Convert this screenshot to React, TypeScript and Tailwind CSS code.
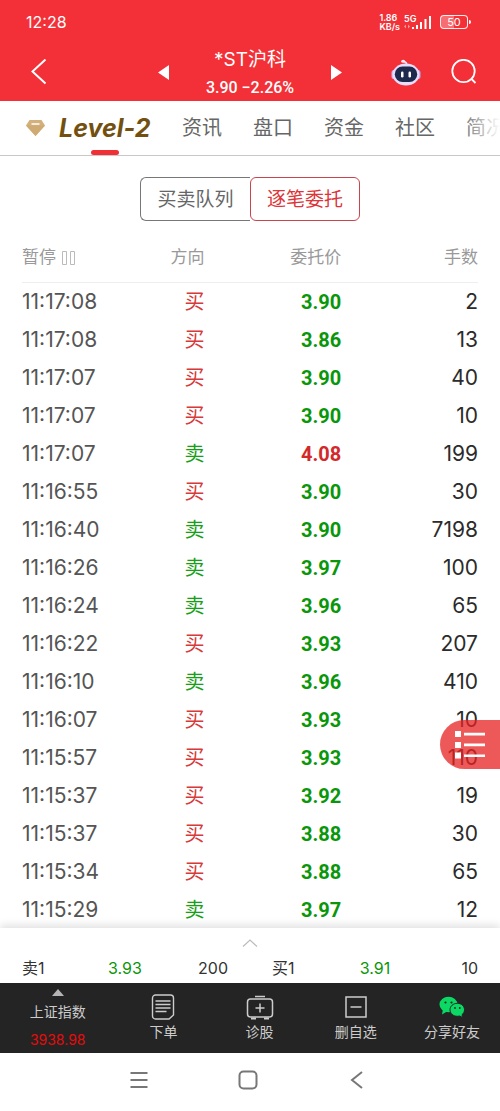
import React, { useState } from 'react';
import clsx from 'clsx';

type Side = '买' | '卖';

interface Order {
  time: string;
  side: Side;
  price: string;
  lots: string;
}

const LAST_CLOSE = 3.99;

const orders: Order[] = [
  { time: '11:17:08', side: '买', price: '3.90', lots: '2' },
  { time: '11:17:08', side: '买', price: '3.86', lots: '13' },
  { time: '11:17:07', side: '买', price: '3.90', lots: '40' },
  { time: '11:17:07', side: '买', price: '3.90', lots: '10' },
  { time: '11:17:07', side: '卖', price: '4.08', lots: '199' },
  { time: '11:16:55', side: '买', price: '3.90', lots: '30' },
  { time: '11:16:40', side: '卖', price: '3.90', lots: '7198' },
  { time: '11:16:26', side: '卖', price: '3.97', lots: '100' },
  { time: '11:16:24', side: '卖', price: '3.96', lots: '65' },
  { time: '11:16:22', side: '买', price: '3.93', lots: '207' },
  { time: '11:16:10', side: '卖', price: '3.96', lots: '410' },
  { time: '11:16:07', side: '买', price: '3.93', lots: '10' },
  { time: '11:15:57', side: '买', price: '3.93', lots: '110' },
  { time: '11:15:37', side: '买', price: '3.92', lots: '19' },
  { time: '11:15:37', side: '买', price: '3.88', lots: '30' },
  { time: '11:15:34', side: '买', price: '3.88', lots: '65' },
  { time: '11:15:29', side: '卖', price: '3.97', lots: '12' },
];

const tabs = ['资讯', '盘口', '资金', '社区', '简况'];

const quotes = [
  { label: '卖1', price: '3.93', lots: '200' },
  { label: '买1', price: '3.91', lots: '10' },
];

function StatusBar() {
  return (
    <div className="flex h-11 items-center justify-between pl-[26px] pr-[29px]">
      <span className="text-base">12:28</span>
      <div className="flex items-center gap-1">
        <div className="text-[9px] leading-[9px] font-semibold">
          <div>1.86</div>
          <div>KB/s</div>
        </div>
        <div className="relative">
          <span className="absolute left-0 top-0 text-[9px] leading-[8px] font-semibold">5G</span>
          <svg className="h-[15px] w-7" viewBox="0 0 28 15" fill="currentColor">
            <g opacity="0.5">
              <path d="M0 11.500 2 9.500v4zM6 11.500l-2-2v4z" />
            </g>
            <path d="M8 12h2v2H8zM12 10h2v4h-2zM16 7h2v7h-2zM20.500 4h2v10h-2zM25 1h2v13h-2z" />
          </svg>
        </div>
        <div className="ml-1 flex items-center gap-px">
          <div className="flex h-[14px] w-7 items-center justify-center rounded-[4px] border border-white/90 bg-linear-to-r from-white/30 from-50% to-transparent to-50% text-[11px] leading-none">
            50
          </div>
          <div className="h-1 w-0.5 rounded-r bg-white" />
        </div>
      </div>
    </div>
  );
}

function Robot() {
  return (
    <svg className="h-7 w-[30px]" viewBox="0 0 30 28">
      <path d="M15.500 6C16 4 15 3 13 2.500" fill="none" stroke="#f6dff0" strokeWidth="1.600" />
      <ellipse cx="12.200" cy="2.300" rx="2" ry="1.500" fill="#fdeaf2" />
      <rect x="0.500" y="11" width="5" height="9" rx="2.500" fill="#cdb5f3" />
      <rect x="24.500" y="11" width="5" height="9" rx="2.500" fill="#b9a6f2" />
      <ellipse cx="15" cy="15.500" rx="13.500" ry="11" fill="#e6dcfb" />
      <rect x="3.800" y="7.500" width="22.400" height="15.500" rx="7.700" fill="#1d2a4d" />
      <rect x="10" y="12.500" width="2.500" height="6" rx="1.200" fill="#fff" />
      <rect x="17.500" y="12.500" width="2.500" height="6" rx="1.200" fill="#fff" />
    </svg>
  );
}

function TitleBar() {
  return (
    <div className="grid h-[57px] grid-cols-[1fr_auto_1fr] items-center px-[22px]">
      <button aria-label="返回" className="ml-2 justify-self-start">
        <svg className="h-7 w-[18px]" viewBox="0 0 18 28" fill="none" stroke="currentColor" strokeWidth="2">
          <path d="M15.500 .5 2.500 12.500l13 12" />
        </svg>
      </button>
      <div className="flex w-[184px] items-center justify-between">
        <button aria-label="上一只">
          <svg className="h-4 w-[11px]" viewBox="0 0 11 16" fill="currentColor">
            <path d="M11 0v15L0 7.500z" />
          </svg>
        </button>
        <div className="pt-0.5 text-center">
          <h1 className="text-[19px] leading-7">*ST沪科</h1>
          <p className="font-['Roboto'] text-base leading-7 font-medium">3.90 −2.26%</p>
        </div>
        <button aria-label="下一只">
          <svg className="h-4 w-[11px]" viewBox="0 0 11 16" fill="currentColor">
            <path d="M0 0v15l11-7.500z" />
          </svg>
        </button>
      </div>
      <div className="flex items-center gap-[29px] justify-self-end">
        <button aria-label="智能助手">
          <Robot />
        </button>
        <button aria-label="搜索">
          <svg className="h-7 w-7" viewBox="0 0 28 28" fill="none" stroke="currentColor" strokeWidth="1.800">
            <circle cx="13.500" cy="12" r="11.200" />
            <path d="m21 19.500 4.500 4.500" />
          </svg>
        </button>
      </div>
    </div>
  );
}

function Tabs() {
  return (
    <nav className="relative flex h-[55px] items-center gap-[31px] overflow-hidden border-b border-[#c8c8c8] pl-[25px] text-xl whitespace-nowrap text-[#666]">
      <a href="#level2" className="relative flex h-full shrink-0 items-center gap-[13px]">
        <svg className="h-[18px] w-[21px]" viewBox="0 0 21 18">
          <path d="M4.500 1h12L20 6.500 10.500 17 1 6.500z" fill="#d3b07c" />
          <path d="M1 6.500h19L10.500 17z" fill="#cfaa72" />
          <path d="M6.500 5h8" stroke="#fff" strokeWidth="1.500" />
        </svg>
        <span className="relative flex h-full w-[92px] items-center text-[25px] font-bold text-[#73500f] italic">
          Level-2
          <span className="absolute bottom-0 left-8 h-[5px] w-7 rounded-full bg-[#f13035]" />
        </span>
      </a>
      {tabs.map((tab) => (
        <a key={tab} href={`#${tab}`} className="shrink-0">
          {tab}
        </a>
      ))}
      <div className="pointer-events-none absolute inset-y-0 right-0 w-10 bg-linear-to-r from-transparent to-white" />
    </nav>
  );
}

function ModeSwitch() {
  const [mode, setMode] = useState('逐笔委托');

  return (
    <div className="flex justify-center pt-[21px]">
      {['买卖队列', '逐笔委托'].map((name) => (
        <button
          key={name}
          onClick={() => setMode(name)}
          className={clsx(
            'h-11 w-[110px] border pt-0.5 text-[19px] first:rounded-l-md',
            mode === name
              ? 'rounded-md border-[#c8454d] text-[#dc353a]'
              : 'border-r-0 border-[#777] text-[#666]'
          )}
        >
          {name}
        </button>
      ))}
    </div>
  );
}

function OrderTable() {
  return (
    <div className="px-[22px] pt-[13px]">
      <table className="w-full table-fixed">
        <colgroup>
          <col className="w-[30%]" />
          <col className="w-[10%]" />
          <col className="w-[30%]" />
          <col className="w-[30%]" />
        </colgroup>
        <thead>
          <tr className="h-12 border-b border-[#eee] text-[17px] text-[#999]">
            <th className="text-left font-normal">
              <button className="flex items-center gap-1.5">
                暂停
                <svg className="h-4 w-4" viewBox="0 0 16 16" fill="none" stroke="#bbb">
                  <path d="M.5 1.500h4v13h-4zM8.500 1.500h4v13h-4z" />
                </svg>
              </button>
            </th>
            <th className="text-right font-normal whitespace-nowrap">方向</th>
            <th className="text-right font-normal">委托价</th>
            <th className="text-right font-normal">手数</th>
          </tr>
        </thead>
        <tbody>
          {orders.map((order, i) => (
            <tr key={i} className="h-[38px] text-[21px] leading-7">
              <td className="p-0 pt-0.5 text-[#555]">{order.time}</td>
              <td
                className={clsx(
                  'p-0 pt-0.5 text-right text-xl',
                  order.side === '买' ? 'text-[#d63a3a]' : 'text-[#16a016]'
                )}
              >
                {order.side}
              </td>
              <td
                className={clsx(
                  "p-0 pt-0.5 text-right font-['Roboto'] text-xl font-bold",
                  Number(order.price) > LAST_CLOSE ? 'text-[#d22a2a]' : 'text-[#0a960a]'
                )}
              >
                {order.price}
              </td>
              <td className="p-0 pt-0.5 text-right text-[#2b2b2b]">{order.lots}</td>
            </tr>
          ))}
        </tbody>
      </table>
    </div>
  );
}

function QuoteSheet() {
  return (
    <section className="relative bg-white shadow-[0_-3px_8px_rgba(0,0,0,0.12)]">
      <button aria-label="展开" className="flex h-[26px] w-full items-center justify-center pt-1">
        <svg className="h-2 w-4" viewBox="0 0 16 8" fill="none" stroke="#bbb" strokeWidth="1.200">
          <path d="m1 7.500 7-6.500 7 6.500" />
        </svg>
      </button>
      <div className="grid h-[29px] grid-cols-2 text-base leading-7 text-[#333]">
        {quotes.map((q) => (
          <div key={q.label} className="grid grid-cols-3 px-[22px]">
            <span>{q.label}</span>
            <span className="text-center text-[#0a960a]">{q.price}</span>
            <span className="text-right">{q.lots}</span>
          </div>
        ))}
      </div>
    </section>
  );
}

function BottomBar() {
  const item = 'flex flex-col items-center gap-0.5 pt-[11px]';
  return (
    <nav className="grid h-[70px] grid-cols-[6fr_5fr_5fr_5fr_5fr] bg-[#242424] text-[14px] leading-5 text-[#ccc]">
      <button className="flex flex-col items-center pt-1.5">
        <svg className="h-[7px] w-3" viewBox="0 0 12 7" fill="#b5b5b5">
          <path d="M6 0l6 7H0z" />
        </svg>
        <span className="pt-1.5">上证指数</span>
        <span className="pt-2 text-[#e60b0b]">3938.98</span>
      </button>
      <button className={item}>
        <svg className="h-[26px] w-6" viewBox="0 0 24 26" fill="none" stroke="currentColor" strokeWidth="1.400">
          <path d="M4.500 1h15a3 3 0 0 1 3 3v17l-4.500 4H4.500a3 3 0 0 1-3-3V4a3 3 0 0 1 3-3z" />
          <path d="M4.500 7h15M4.500 10.500h15M4.500 14h15M4.500 17.500h11" />
        </svg>
        <span>下单</span>
      </button>
      <button className={item}>
        <svg className="h-[26px] w-7" viewBox="0 0 28 26" fill="none" stroke="currentColor" strokeWidth="1.500">
          <path d="M9 2.500h10" />
          <rect x="1.500" y="5" width="25" height="18" rx="3" />
          <path d="M14 9.500v9M9.500 14h9" />
          <path d="M5 24.500h5M18 24.500h5" strokeWidth="2" />
        </svg>
        <span>诊股</span>
      </button>
      <button className={item}>
        <svg className="h-[26px] w-[22px]" viewBox="0 0 22 26" fill="none" stroke="currentColor" strokeWidth="1.500">
          <rect x="1" y="3" width="20" height="20" />
          <path d="M5.500 13h11" />
        </svg>
        <span>删自选</span>
      </button>
      <button className={item}>
        <svg className="h-[26px] w-[26px]" viewBox="0 0 26 26">
          <g fill="#0bd964">
            <ellipse cx="9.500" cy="10.500" rx="9" ry="7.800" />
            <path d="M4 15l-1 5.500 5-3z" />
          </g>
          <path
            d="M18.300 9.300c4.100 0 7.200 2.900 7.200 6.500 0 2-1 3.700-2.500 4.900l.6 2.800-3-1.500c-.7.200-1.500.3-2.300.3-4.100 0-7.300-2.900-7.300-6.500s3.200-6.500 7.300-6.500z"
            fill="#0bd964"
            stroke="#242424"
          />
          <g fill="#242424">
            <circle cx="6.500" cy="8.500" r="1.100" />
            <circle cx="12.500" cy="8.500" r="1.100" />
            <circle cx="16" cy="14" r="0.900" />
            <circle cx="20.800" cy="14" r="0.900" />
          </g>
        </svg>
        <span>分享好友</span>
      </button>
    </nav>
  );
}

function SystemBar() {
  return (
    <div className="flex h-[58px] items-center justify-center gap-[89px] bg-white pr-1 pb-1 text-[#777]">
      <button aria-label="任务">
        <svg className="h-5 w-5" viewBox="0 0 20 20" stroke="currentColor" strokeWidth="2">
          <path d="M1.500 3h17M1.500 10h17M1.500 17h17" />
        </svg>
      </button>
      <button aria-label="主页">
        <svg className="h-5 w-5" viewBox="0 0 20 20" fill="none" stroke="currentColor" strokeWidth="2">
          <rect x="1.500" y="1.500" width="17" height="17" rx="4" />
        </svg>
      </button>
      <button aria-label="后退">
        <svg className="h-5 w-5" viewBox="0 0 20 20" fill="none" stroke="currentColor" strokeWidth="2">
          <path d="M15 2 5 10l10 8" />
        </svg>
      </button>
    </div>
  );
}

export default function App() {
  return (
    <div className="min-h-screen bg-white font-['Inter','Noto_Sans_CJK_SC',sans-serif]">
      <header className="bg-[#f33037] text-white">
        <StatusBar />
        <TitleBar />
      </header>
      <Tabs />
      <main className="relative">
        <ModeSwitch />
        <OrderTable />
        {/* floating menu handle, sits over the list */}
        <button
          aria-label="菜单"
          className="absolute right-0 bottom-[159px] flex h-[49px] w-[60px] items-center rounded-l-full bg-[#e72222]/75 pl-[15px]"
        >
          <svg className="h-7 w-[30px]" viewBox="0 0 30 28" fill="#fff">
            <path d="M0 0h6v6H0zM0 11h6v6H0zM0 21.500h6v6H0zM9 1.800h21v2.600H9zM9 12.600h21v2.600H9zM9 23.400h21V26H9z" />
          </svg>
        </button>
      </main>
      <QuoteSheet />
      <BottomBar />
      <SystemBar />
    </div>
  );
}
